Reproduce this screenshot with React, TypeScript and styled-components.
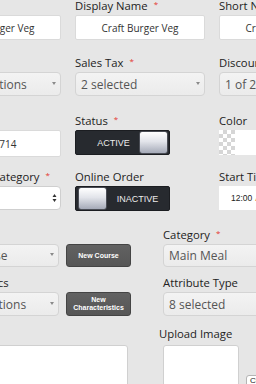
import React from "react";
import styled, { createGlobalStyle } from "styled-components";

const Global = createGlobalStyle`
  html, body { margin: 0; padding: 0; background: #e6e6e6; overflow: hidden; }
  body {
    width: 256px; height: 384px;
    font-family: "Open Sans", "DejaVu Sans", sans-serif;
  }
`;

const Page = styled.div`
  width: 480px;
  margin-left: -69px;
  margin-top: -1px;
`;

const Row = styled.div<{ $mt: number }>`
  display: grid;
  grid-template-columns: repeat(3, 130px);
  column-gap: 14px;
  margin-top: ${(p) => p.$mt}px;
  align-items: start;
`;

const LowerRow = styled.div<{ $mt: number }>`
  display: grid;
  grid-template-columns: 200px 200px;
  column-gap: 32px;
  margin-top: ${(p) => p.$mt}px;
  align-items: start;
`;

const Field = styled.div<{ $gap?: number }>`
  display: flex;
  flex-direction: column;
  gap: ${(p) => p.$gap ?? 2}px;
  min-width: 0;
`;

const Label = styled.div<{ $shift?: number }>`
  height: 14px;
  line-height: 14px;
  font-size: 11.3px;
  color: #222;
  white-space: nowrap;
  margin-left: ${(p) => p.$shift ?? 0}px;
`;

const Req = styled.span`
  color: #e3342f;
  font-size: 8px;
  margin-left: 6px;
  position: relative;
  top: -3px;
`;

const TextInput = styled.input<{ $h?: number; $shiftLeft?: number }>`
  height: ${(p) => p.$h ?? 25}px;
  width: 100%;
  box-sizing: border-box;
  background: #fff;
  border: 1px solid #dadada;
  border-radius: 2px;
  padding: 0 ${(p) => 4 + (p.$shiftLeft ?? 0)}px 0 4px;
  margin: 0;
  font-family: "Open Sans", "DejaVu Sans", sans-serif;
  font-size: 10px;
  color: #333;
  text-align: center;
  outline: none;
`;

const Select = styled.div<{ $h?: number; $w?: number }>`
  height: ${(p) => p.$h ?? 24}px;
  width: ${(p) => (p.$w ? `${p.$w}px` : "100%")};
  box-sizing: border-box;
  background: linear-gradient(#f3f3f3, #ebebeb);
  border: 1px solid #d4d4d4;
  border-radius: 4px;
  display: flex;
  align-items: center;
  padding: 0 4px 0 5px;
  font-size: 12px;
  color: #555;
  white-space: nowrap;
  overflow: hidden;
  flex-shrink: 0;
`;

const SelectText = styled.span`
  flex: 1;
  overflow: hidden;
`;

const Caret = styled.span`
  width: 0;
  height: 0;
  border-left: 2.5px solid transparent;
  border-right: 2.5px solid transparent;
  border-top: 3px solid #8a8a8a;
  margin-top: -2px;
  flex-shrink: 0;
`;

const NativeSelect = styled.div`
  height: 24px;
  box-sizing: border-box;
  background: #fff;
  border: 1px solid #cfcfcf;
  border-radius: 4px;
  display: flex;
  align-items: center;
  justify-content: flex-end;
  padding-right: 3px;
`;

const Toggle = styled.div<{ $on: boolean }>`
  width: 95px;
  height: 25px;
  box-sizing: border-box;
  background: #272a2f;
  border: 1px solid #1b1d21;
  border-radius: 2px;
  display: flex;
  align-items: center;
  padding: 0 1px 0 2px;
  flex-direction: ${(p) => (p.$on ? "row" : "row-reverse")};
`;

const ToggleText = styled.span<{ $on: boolean }>`
  flex: 1;
  text-align: center;
  color: #ececec;
  font-family: "Liberation Sans", Arial, sans-serif;
  font-size: 9px;
  padding-left: ${(p) => (p.$on ? 10 : 0)}px;
`;

const Knob = styled.span`
  width: 29px;
  height: 23px;
  box-sizing: border-box;
  border-radius: 3px;
  border: 1px solid #4a4d55;
  background: linear-gradient(#ffffff, #e2e4ea 45%, #a5aab8);
  flex-shrink: 0;
`;

const ColorWrap = styled.div`
  display: flex;
  height: 25px;
`;

const Swatch = styled.span`
  width: 16px;
  flex-shrink: 0;
  background-color: #fff;
  background-image: conic-gradient(#d6d6d6 25%, #fff 0 50%, #d6d6d6 0 75%, #fff 0);
  background-size: 8px 8px;
`;

const ColorInput = styled.span`
  flex: 1;
  background: #fff;
`;

const TimeInput = styled.div`
  height: 24px;
  box-sizing: border-box;
  background: #fff;
  display: flex;
  align-items: center;
  padding-left: 12px;
  font-family: "Liberation Sans", Arial, sans-serif;
  font-size: 8.5px;
  color: #222;
  white-space: nowrap;
`;

const Meridiem = styled.span`
  color: #d9822b;
  margin-left: 3px;
`;

const Inline = styled.div<{ $h: number }>`
  display: flex;
  gap: 7px;
  height: ${(p) => p.$h}px;
`;

const ActionButton = styled.button`
  width: 65px;
  height: 100%;
  box-sizing: border-box;
  background: linear-gradient(#626262, #565656);
  border: 1px solid #444;
  border-radius: 3px;
  color: #fff;
  font-family: "Liberation Sans", Arial, sans-serif;
  font-weight: bold;
  font-size: 7px;
  line-height: 8px;
  padding: 0;
  margin: 0;
`;

const TextArea = styled.div`
  width: 197px;
  height: 60px;
  box-sizing: border-box;
  background: #fff;
  border: 1px solid #d0d0d0;
  border-radius: 3px;
`;

const UploadRow = styled.div`
  display: flex;
  align-items: flex-end;
  gap: 7px;
`;

const UploadBox = styled.div`
  width: 76px;
  height: 42px;
  box-sizing: border-box;
  background: #fff;
  border: 1px solid #d0d0d0;
  border-radius: 3px;
`;

const SmallButton = styled.button`
  height: 12px;
  box-sizing: border-box;
  background: #fff;
  border: 1px solid #b5b5b5;
  border-radius: 3px;
  padding: 0 3px;
  margin: 0;
  font-family: "Liberation Sans", Arial, sans-serif;
  font-size: 8px;
  line-height: 10px;
  color: #222;
  white-space: nowrap;
`;

const UpDown = () => (
  <svg width="5" height="10" viewBox="0 0 5 10">
    <path d="M0.5 4 L2.5 1 L4.5 4 Z M0.5 6 L4.5 6 L2.5 9 Z" fill="#333" />
  </svg>
);

const DropSelect = ({ text, h, w }: { text: string; h?: number; w?: number }) => (
  <Select $h={h} $w={w}>
    <SelectText>{text}</SelectText>
    <Caret />
  </Select>
);

export default function App() {
  return (
    <>
      <Global />
      <Page>
        <Row $mt={0}>
          <Field>
            <Label>Name<Req>*</Req></Label>
            <TextInput readOnly value="Craft Burger Veg" />
          </Field>
          <Field>
            <Label>Display Name<Req>*</Req></Label>
            <TextInput readOnly value="Craft Burger Veg" />
          </Field>
          <Field>
            <Label>Short Name<Req>*</Req></Label>
            <TextInput readOnly value="Craft Burger Veg" />
          </Field>
        </Row>

        <Row $mt={16}>
          <Field>
            <Label>Tags</Label>
            <DropSelect text="Select Locations" />
          </Field>
          <Field>
            <Label>Sales Tax<Req>*</Req></Label>
            <DropSelect text="2 selected" />
          </Field>
          <Field>
            <Label>Discount</Label>
            <DropSelect text="1 of 2 selected" />
          </Field>
        </Row>

        <Row $mt={18}>
          <Field>
            <Label>SKU</Label>
            <TextInput $h={27} $shiftLeft={5} readOnly value="89000714" />
          </Field>
          <Field>
            <Label>Status<Req>*</Req></Label>
            <Toggle $on>
              <ToggleText $on>ACTIVE</ToggleText>
              <Knob />
            </Toggle>
          </Field>
          <Field>
            <Label>Color</Label>
            <ColorWrap>
              <Swatch />
              <ColorInput />
            </ColorWrap>
          </Field>
        </Row>

        <Row $mt={13}>
          <Field>
            <Label>Accounting Category<Req>*</Req></Label>
            <NativeSelect>
              <UpDown />
            </NativeSelect>
          </Field>
          <Field>
            <Label>Online Order</Label>
            <Toggle $on={false}>
              <ToggleText $on={false}>INACTIVE</ToggleText>
              <Knob />
            </Toggle>
          </Field>
          <Field>
            <Label>Start Time</Label>
            <TimeInput>
              12:00<Meridiem>AM</Meridiem>
            </TimeInput>
          </Field>
        </Row>

        <LowerRow $mt={17}>
          <Field>
            <Label>Course</Label>
            <Inline $h={23}>
              <DropSelect text="Main Course" h={23} w={128} />
              <ActionButton>New Course</ActionButton>
            </Inline>
          </Field>
          <Field>
            <Label>Category<Req>*</Req></Label>
            <DropSelect text="Main Meal" h={23} w={130} />
          </Field>
        </LowerRow>

        <LowerRow $mt={9}>
          <Field>
            <Label>Characteristics</Label>
            <Inline $h={24}>
              <DropSelect text="Select Additions" h={24} w={128} />
              <ActionButton>
                New
                <br />
                Characteristics
              </ActionButton>
            </Inline>
          </Field>
          <Field>
            <Label>Attribute Type</Label>
            <DropSelect text="8 selected" h={24} w={130} />
          </Field>
        </LowerRow>

        <LowerRow $mt={11}>
          <Field $gap={4}>
            <Label>Description</Label>
            <TextArea />
          </Field>
          <Field $gap={4}>
            <Label $shift={-4}>Upload Image</Label>
            <UploadRow>
              <UploadBox />
              <SmallButton>Choose File</SmallButton>
            </UploadRow>
          </Field>
        </LowerRow>
      </Page>
    </>
  );
}
